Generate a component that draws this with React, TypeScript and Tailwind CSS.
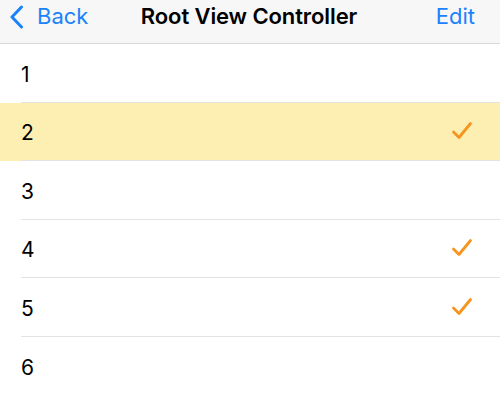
import React from 'react';

const rows = [
  { label: '1', checked: false, selected: false },
  { label: '2', checked: true, selected: true },
  { label: '3', checked: false, selected: false },
  { label: '4', checked: true, selected: false },
  { label: '5', checked: true, selected: false },
  { label: '6', checked: false, selected: false },
];

const Check = () => (
  <svg width="22" height="20" viewBox="0 0 22 20" fill="none">
    <path d="M2.5 11 L8 16.5 L19.5 2.5" stroke="#f7941d" strokeWidth="2.8" strokeLinecap="round" strokeLinejoin="round" />
  </svg>
);

export default function App() {
  return (
    <div className="w-[500px] h-[396px] overflow-hidden bg-white" style={{ fontFamily: 'Inter, "Liberation Sans", sans-serif' }}>
      {/* Nav bar */}
      <div className="h-[44px] bg-[#f7f7f7] border-b border-[#d8d8d8] grid grid-cols-[1fr_auto_1fr] items-center pl-[10px] pb-[10px]">
        <button className="flex items-center gap-[13px] text-[#1a82fb] text-[22px] justify-self-start">
          <svg width="14" height="24" viewBox="0 0 14 24" fill="none">
            <path d="M11.5 2 L2 12 L11.5 22" stroke="#1a82fb" strokeWidth="3" strokeLinecap="round" strokeLinejoin="round" />
          </svg>
          <span className="-mt-[1px]">Back</span>
        </button>
        <div className="text-[22px] font-semibold text-black -ml-[12px] tracking-[-0.1px]">Root View Controller</div>
        <button className="text-[#1a82fb] text-[22px] pr-[25px] justify-self-end">Edit</button>
      </div>

      {/* Table */}
      <div>
        {rows.map((row, i) => (
          <div key={row.label} className={row.selected ? 'bg-[#fdefb2]' : 'bg-white'}>
            <div
              className={
                'h-[58.5px] ml-[21px] flex items-center justify-between pr-[27px] ' +
                (i < rows.length - 1 ? 'border-b border-[#e2e2e2]' : '')
              }
            >
              <span className="text-[21px] text-black mt-[3px]">{row.label}</span>
              {row.checked && <Check />}
            </div>
          </div>
        ))}
      </div>
    </div>
  );
}
